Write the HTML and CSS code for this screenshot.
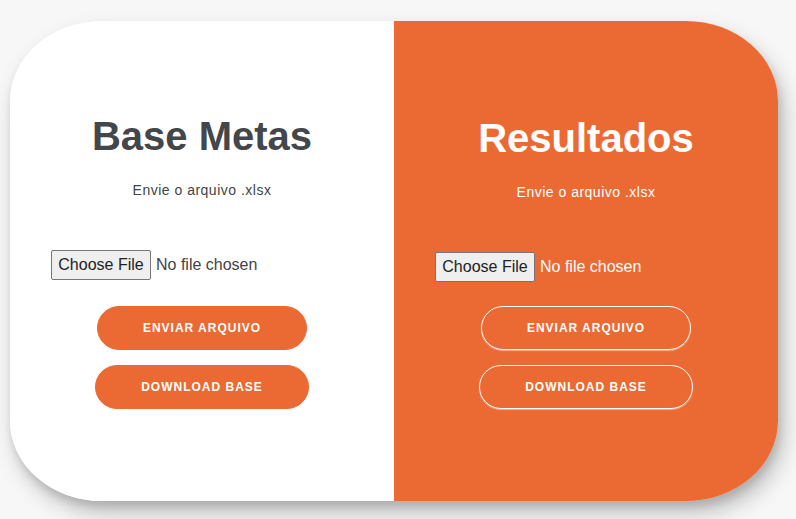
FILE: index.html
```html
<!DOCTYPE html>
<html lang="pt-BR">
<head>
<meta charset="utf-8">
<title>Upload de bases</title>
<link rel="stylesheet" href="styles.css">
</head>
<body>
  <div class="card">
    <section class="panel panel-light">
      <h1 class="title">Base Metas</h1>
      <p class="subtitle">Envie o arquivo .xlsx</p>
      <input class="file" type="file" accept=".xlsx">
      <button class="btn btn-solid btn-send">Enviar arquivo</button>
      <button class="btn btn-solid">Download base</button>
    </section>
    <section class="panel panel-orange">
      <h1 class="title">Resultados</h1>
      <p class="subtitle">Envie o arquivo .xlsx</p>
      <input class="file" type="file" accept=".xlsx">
      <button class="btn btn-ghost btn-send">Enviar arquivo</button>
      <button class="btn btn-ghost">Download base</button>
    </section>
  </div>
</body>
</html>
```
FILE: styles.css
```css
* { box-sizing: border-box; }

html, body {
  margin: 0;
  height: 100%;
}

body {
  background: #f7f7f7;
  font-family: "Liberation Sans", Arial, sans-serif;
  padding: 21px 0 0 10px;
}

.card {
  width: 768px;
  height: 480px;
  display: flex;
  border-radius: 92px / 80px;
  overflow: hidden;
  box-shadow: 6px 12px 22px rgba(0, 0, 0, 0.22), 2px 6px 8px rgba(0, 0, 0, 0.12);
}

.panel {
  flex: 1;
  display: flex;
  flex-direction: column;
  justify-content: center;
  align-items: center;
  padding: 0 40px;
  text-align: center;
}

.panel-light {
  background: #ffffff;
  color: #43464a;
}

.panel-orange {
  background: #eb6a34;
  color: #ffffff;
  padding-top: 2px;
}

.title {
  margin: 0;
  font-size: 40px;
  line-height: 46px;
  font-weight: bold;
}

.subtitle {
  margin: 21px 0 50px;
  font-size: 14px;
  line-height: 20px;
  letter-spacing: 0.5px;
  color: #444;
}

.panel-orange .subtitle { color: #fff; }

.file {
  display: block;
  align-self: stretch;
  height: 30px;
  margin: 0 0 26px 1px;
  padding: 0;
  font-family: "Liberation Sans", Arial, sans-serif;
  font-size: 16px;
  line-height: 30px;
  color: #444;
  text-align: left;
}

.panel-orange .file {
  color: #fff;
  margin-bottom: 24px;
}

.file::file-selector-button {
  font-family: "Liberation Sans", Arial, sans-serif;
  font-size: 16px;
  line-height: 18px;
  width: 100px;
  height: 30px;
  padding: 5px 0;
  margin: 0 5px 0 0;
  border: 1px solid #767676;
  border-radius: 2px;
  background: #efefef;
  color: #222;
}

.btn {
  font-family: "Liberation Sans", Arial, sans-serif;
  font-size: 12px;
  line-height: 16px;
  font-weight: bold;
  letter-spacing: 1px;
  text-transform: uppercase;
  padding: 13px 45px;
  border-radius: 30px;
  cursor: pointer;
}

.btn-send { margin-bottom: 15px; }

.btn-solid {
  background: #eb6a34;
  border: 1px solid #eb6a34;
  color: #fff;
}

.btn-ghost {
  background: transparent;
  border: 1px solid #ffffff;
  color: #fff;
  box-shadow: 0 1px 1px rgba(255, 255, 255, 0.45);
}
```
